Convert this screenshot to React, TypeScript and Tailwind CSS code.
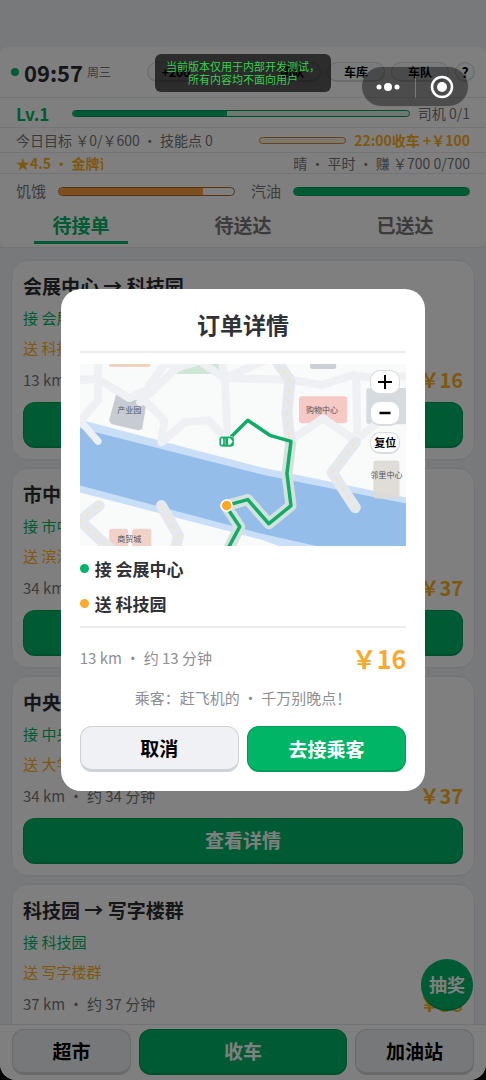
import clsx from "clsx";

const ORDERS = [
  { id: 1, from: "会展中心", to: "科技园", km: 13, price: 16 },
  { id: 2, from: "市中心", to: "滨江公园", km: 34, price: 37 },
  { id: 3, from: "中央公园", to: "大学城", km: 34, price: 37 },
  { id: 4, from: "科技园", to: "写字楼群", km: 37, price: 38 },
];

const TABS = ["待接单", "待送达", "已送达"];

const BTN = "h-[46px] rounded-xl text-[19px] font-bold border";
const BTN_GREEN = "bg-[#00b566] text-white border-[#009e58] border-b-2";
const BTN_GRAY = "bg-[#eff1f4] text-black border-[#cfd2d6] border-b-3";
const PILL = "shrink-0 h-5 rounded-full border border-[#d5d8dc] border-b-2 bg-[#f7f8fa] leading-none";

interface BarProps {
  value: number;
  label: string;
  className: string;
  fill: string;
}

function Bar({ value, label, className, fill }: BarProps) {
  return (
    <div
      role="progressbar"
      aria-label={label}
      aria-valuenow={value}
      className={clsx("rounded-full border overflow-hidden", className)}
    >
      <div className={clsx("h-full", fill)} style={{ width: `${value}%` }} />
    </div>
  );
}

function Header() {
  return (
    <header className="bg-white rounded-lg text-[#777]">
      <div className="h-[51px] px-[11px] flex items-center border-b border-[#e6e8eb]">
        <span className="size-2 shrink-0 rounded-full bg-[#00b566]" />
        <span className="ml-[5px] text-[22px] font-bold text-[#2b2d31]">09:57</span>
        <span className="ml-1 text-[12px] whitespace-nowrap">周三</span>
        <div className="ml-auto flex gap-[6px] text-[12px] font-bold text-black">
          <button className={clsx(PILL, "w-[58px] mr-[52px]")}>+200</button>
          <button className={clsx(PILL, "w-[58px]")}>团队</button>
          <button className={clsx(PILL, "w-[58px]")}>车库</button>
          <button className={clsx(PILL, "w-[58px]")}>车队</button>
          <button className={clsx(PILL, "w-5 text-[14px]")}>?</button>
        </div>
      </div>
      <div className="h-[30px] px-4 pt-[2px] flex items-center border-b border-[#e6e8eb]">
        <span className="w-14 text-[17px] font-bold text-[#00b566]">Lv.1</span>
        <Bar value={46} label="等级" className="flex-1 h-[7px] border-[#00995a] bg-[#dff3e8]" fill="bg-[#00b566]" />
        <span className="ml-2 text-[14px]">司机 0/1</span>
      </div>
      <div className="h-[25px] px-4 flex items-center text-[14px] border-b border-[#e6e8eb]">
        <span>今日目标 ￥0/￥600 ・ 技能点 0</span>
        <Bar value={0} label="收车" className="ml-auto w-[87px] h-[7px] border-[#c08a3c] bg-[#fff0d8]" fill="bg-[#ffa726]" />
        <span className="ml-2 font-bold text-[#ffb01e]">22:00收车 +￥100</span>
      </div>
      <div className="h-[21px] px-4 flex items-center justify-between text-[14px] border-b border-[#e6e8eb]">
        <span className="w-[87px] overflow-hidden whitespace-nowrap font-bold text-[#ffb01e]">★4.5 ・ 金牌评价</span>
        <span>晴 ・ 平时 ・ 赚 ￥700 0/700</span>
      </div>
      <div className="h-[35px] px-4 flex items-center gap-4 text-[15px]">
        <div className="flex-1 flex items-center gap-3">
          <span>饥饿</span>
          <Bar value={82} label="饥饿" className="flex-1 h-[9px] border-[#b06a20]" fill="bg-[#fb9d3c]" />
        </div>
        <div className="flex-1 flex items-center gap-3">
          <span>汽油</span>
          <Bar value={100} label="汽油" className="flex-1 h-[9px] border-[#009e58]" fill="bg-[#00b566]" />
        </div>
      </div>
      <nav className="h-[39px] grid grid-cols-3 border-b border-[#e6e8eb]">
        {TABS.map((tab, i) => (
          <button
            key={tab}
            className={clsx(
              "mx-[34px] mb-[3px] pb-[2px] text-[19px] leading-none font-bold border-b-3",
              i === 0 ? "text-[#00b566] border-[#00b566]" : "border-transparent"
            )}
          >
            {tab}
          </button>
        ))}
      </nav>
    </header>
  );
}

function OrderCard({ order }: { order: (typeof ORDERS)[number] }) {
  return (
    <article className="shrink-0 h-[200px] px-[11px] pt-[10px] bg-white rounded-2xl border border-[#e4e7ec]">
      <h2 className="text-[19px] leading-[30px] font-bold text-[#2b2d31]">
        {order.from} → {order.to}
      </h2>
      <p className="mt-[2px] text-[15px] leading-[30px] text-[#00b566]">接 {order.from}</p>
      <p className="text-[15px] leading-[30px] text-[#ffb01e]">送 {order.to}</p>
      <div className="h-[34px] mb-[5px] flex items-center justify-between">
        <span className="text-[15px] text-[#777]">
          {order.km} km ・ 约 {order.km} 分钟
        </span>
        <span className="text-[20px] leading-none font-bold text-[#ffb01e]">￥{order.price}</span>
      </div>
      <button className={clsx("w-full", BTN, BTN_GREEN)}>查看详情</button>
    </article>
  );
}

function RouteMap() {
  return (
    <svg viewBox="0 0 325 182" className="block w-full" role="img" aria-label="路线地图">
      <rect width="325" height="182" fill="#f9fafa" />
      {/* river */}
      <path d="M0 62L6 57L181 103L325 133V182H200L181 175L0 128Z" fill="#c9dff7" />
      <path d="M0 64L181 110L325 139V182H239L181 169L0 121Z" fill="#94bee9" />
      {/* blocks */}
      <path d="M88 10L118 0H142L141 10Z" fill="#cfe6d6" />
      <rect x="29" y="-6" width="41" height="9" rx="2" fill="#f0d2bd" />
      <rect x="229" y="-6" width="26" height="11" rx="2" fill="#cbd0d7" />
      <rect x="285" y="24" width="44" height="36" rx="3" fill="#d6dbe0" />
      <path d="M37 30L65 40L61 64L58 65L32 59L30 56Z" fill="#c7ccd3" stroke="#c7ccd3" strokeWidth="2" strokeLinejoin="round" />
      <rect x="218" y="32" width="48" height="27" rx="3" fill="#f5c9c6" />
      <rect x="29" y="164" width="19" height="24" rx="3" fill="#f0d2c9" />
      <rect x="52" y="164" width="19" height="24" rx="3" fill="#f0d2c9" />
      {/* streets */}
      <g fill="none" stroke="#eef0f4" strokeWidth="8" strokeLinecap="round" strokeLinejoin="round">
        <path d="M18 -4V36L0 57" />
        <path d="M-4 16L18 15L49 34L66 26L84 0" />
        <path d="M60 38L96 4L84 -4M96 4L119 -3L144 14" />
        <path d="M64 36L84 56L81 78L104 58L128 56L141 70" />
        <path d="M141 -4L144 14L147 70" />
        <path d="M144 14L181 15L211 16L241 21L272 11L292 14L330 12" />
        <path d="M144 14L183 -3" />
        <path d="M275 13L276 76" />
        <path d="M214 73L242 54L274 76L294 60" />
        <path d="M4 61L18 77" strokeWidth="7" />
      </g>
      <g fill="none" stroke="#e5e8ec" strokeWidth="11" strokeLinecap="round" strokeLinejoin="round">
        <path d="M195 -4L209 16L206 49L209 77" />
        <path d="M274 78L251 108L274 143" />
        <path d="M19 141L0 156L32 186" />
        <path d="M81 141L98 171L94 188" />
      </g>
      <g fill="none" stroke="#f6e2ac" strokeWidth="1" strokeDasharray="5 6">
        <path d="M195 -4L209 16L206 49L208 77" />
        <path d="M274 78L251 108L274 143" />
        <path d="M19 141L0 156L32 186" />
        <path d="M81 141L98 171L94 188" />
      </g>
      <rect x="292" y="96" width="26" height="38" rx="3" fill="#ddd9d5" opacity="0.9" />
      {/* route */}
      <path d="M210 77L206 109L210 141L188 159L167 135L145 141L159 162L148 184" fill="none" stroke="#d4e2df" strokeWidth="11" strokeLinejoin="round" />
      <path d="M150 73L167 56L189 71L210 77L206 109L210 141L188 159L167 135L145 141L159 162L146 186" fill="none" stroke="#12ac67" strokeWidth="3.5" strokeLinejoin="round" />
      <circle cx="146" cy="141" r="5.5" fill="#ffa726" stroke="#fff" strokeWidth="1.5" />
      {/* car */}
      <rect x="138.5" y="72" width="15" height="10.5" rx="3" fill="#12ac67" stroke="#fff" strokeWidth="0.5" />
      <rect x="140.5" y="74" width="2" height="6.5" rx="1" fill="#fff" />
      <rect x="144" y="74" width="1" height="6.5" fill="#7bd3ab" />
      <path d="M147.5 74H149.5L152 77.2L149.5 80.5H147.5Z" fill="#fff" />
      <g fontSize="8" textAnchor="middle" fill="#50545c">
        <text x="49" y="49">产业园</text>
        <text x="241" y="49">购物中心</text>
        <text x="49" y="177">商贸城</text>
        <text x="305" y="113">邻里中心</text>
      </g>
    </svg>
  );
}

function OrderModal() {
  return (
    <div role="dialog" aria-label="订单详情" className="w-3/4 px-[19px] pb-[19px] bg-white rounded-[20px] text-[#2f3237]">
      <h1 className="h-16 flex items-center justify-center pt-[10px] text-[23px] font-bold border-b-2 border-[#eceded]">订单详情</h1>
      <div className="relative mt-[11px]">
        <RouteMap />
        <div className="absolute top-[6px] right-[6px] flex flex-col gap-[6px] text-black">
          <button aria-label="放大" className="w-[30px] h-[25px] flex items-center justify-center rounded-[10px] bg-white border border-b-2 border-[#d8dbdf]">
            <svg viewBox="0 0 14 14" className="size-[14px]" stroke="currentColor" strokeWidth="2"><path d="M0 7H14M7 0V14" /></svg>
          </button>
          <button aria-label="缩小" className="w-[30px] h-[25px] flex items-center justify-center rounded-[10px] bg-white border border-b-2 border-[#d8dbdf]">
            <svg viewBox="0 0 14 14" className="size-[14px]" stroke="currentColor" strokeWidth="2.5"><path d="M1.5 7H12.5" /></svg>
          </button>
          <button className="w-[30px] h-[22px] rounded-[10px] bg-white border border-b-2 border-[#d8dbdf] text-[11px] leading-none font-bold">复位</button>
        </div>
      </div>
      <div className="pt-[5px] pb-[5px] text-[17px] leading-[35px] font-bold border-b-2 border-[#eceded]">
        <p className="flex items-center gap-[6px]">
          <span className="size-[9px] rounded-full bg-[#00b566]" />接 会展中心
        </p>
        <p className="flex items-center gap-[6px]">
          <span className="size-[9px] rounded-full bg-[#f9a92b]" />送 科技园
        </p>
      </div>
      <div className="h-[60px] flex items-center justify-between">
        <span className="text-[15px] text-[#8d8f93]">13 km ・ 约 13 分钟</span>
        <span className="text-[25px] font-bold text-[#f9a92b]">￥16</span>
      </div>
      <p className="text-center text-[15px] leading-5 text-[#8d8f93]">乘客：赶飞机的 ・ 千万别晚点！</p>
      <div className="mt-[18px] grid grid-cols-2 gap-2">
        <button className={clsx(BTN, BTN_GRAY)}>取消</button>
        <button className={clsx(BTN, BTN_GREEN)}>去接乘客</button>
      </div>
    </div>
  );
}

export default function App() {
  return (
    <div className="relative h-screen bg-black overflow-hidden font-['Noto_Sans_CJK_SC',sans-serif]">
      <div className="h-full flex flex-col bg-[#f0f2f5] rounded-b-2xl overflow-hidden pt-[47px]">
        <Header />
        <main className="flex-1 min-h-0 overflow-hidden px-[11px] pt-3 flex flex-col gap-2">
          {ORDERS.map((order) => (
            <OrderCard key={order.id} order={order} />
          ))}
        </main>
        <footer className="h-14 px-3 pt-1 bg-white border-t border-[#e4e7ec] grid grid-cols-[4fr_7fr_4fr] gap-2">
          <button className={clsx(BTN, BTN_GRAY)}>超市</button>
          <button className={clsx(BTN, BTN_GREEN)}>收车</button>
          <button className={clsx(BTN, BTN_GRAY)}>加油站</button>
        </footer>
      </div>
      <button className="absolute right-[13px] bottom-[69px] size-[52px] rounded-full bg-[#00b566] border-b-2 border-[#009e58] text-[18px] font-bold text-white">
        抽奖
      </button>

      <div className="absolute inset-0 bg-black/50 flex items-center justify-center">
        <OrderModal />
      </div>

      {/* notice */}
      <div className="absolute top-[54px] left-1/2 -translate-x-1/2 w-[176px] h-[38px] flex items-center justify-center rounded-md bg-black/65 text-center text-[11px] leading-[13px] text-[#35cf4d]">
        <p>当前版本仅用于内部开发测试，<br />所有内容均不面向用户</p>
      </div>
      {/* mini program capsule */}
      <div className="absolute top-[66px] right-[17px] w-[108px] h-[41px] rounded-full border border-white/25 bg-black/40 flex items-center text-white">
        <button aria-label="更多" className="flex-1 flex justify-center">
          <svg viewBox="0 0 24 10" className="w-6" fill="currentColor">
            <circle cx="3" cy="5" r="2.5" />
            <circle cx="12" cy="5" r="4" />
            <circle cx="21" cy="5" r="2.5" />
          </svg>
        </button>
        <span className="w-px h-[22px] bg-white/25" />
        <button aria-label="关闭" className="flex-1 flex justify-center">
          <svg viewBox="0 0 24 24" className="size-6">
            <circle cx="12" cy="12" r="10" fill="none" stroke="currentColor" strokeWidth="2.5" />
            <circle cx="12" cy="12" r="5" fill="currentColor" />
          </svg>
        </button>
      </div>
    </div>
  );
}
